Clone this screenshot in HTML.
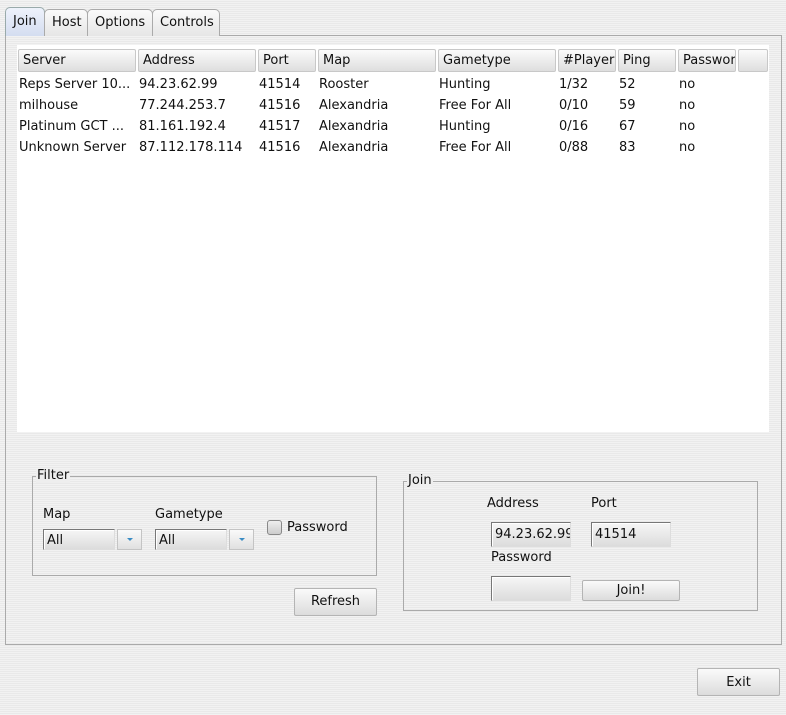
<!DOCTYPE html>
<html><head><meta charset="utf-8"><style>
*{box-sizing:border-box;margin:0;padding:0}
body{width:786px;height:715px;overflow:hidden;font-family:"DejaVu Sans","Liberation Sans",sans-serif;font-size:13px;color:#111;
background:repeating-linear-gradient(to bottom,#f2f2f2 0 1px,#e9e9e9 1px 2px);position:relative}
.a{position:absolute}
.tab{position:absolute;top:9px;height:27px;border:1px solid #aaa;border-bottom:none;border-radius:5px 5px 0 0;background:linear-gradient(#fafafa,#e6e6e6);padding:5px 0 0 7px;white-space:nowrap}
.panel{left:5px;top:35px;width:777px;height:610px;border:1px solid #aaa;background:repeating-linear-gradient(to bottom,#f2f2f2 0 1px,#e9e9e9 1px 2px)}
.tbl{left:17px;top:45px;width:752px;height:387px;background:#fff}
.h{position:absolute;top:49px;height:23px;border:1px solid #c8c8c8;border-radius:2px;background:linear-gradient(#fbfbfb,#dedede);padding:3px 0 0 4px;overflow:hidden;white-space:nowrap}
.c{position:absolute;white-space:nowrap;overflow:hidden;top:74px;line-height:21px}
.grp{position:absolute;border:1px solid #aaa}
.gt{position:absolute;background:#eee;padding:0 1px;line-height:14px}
.btn{position:absolute;border:1px solid #b4b4b4;border-radius:2px;background:linear-gradient(#fafafa,#dcdcdc);text-align:center}
.inp{position:absolute;border:1px solid #777;border-right-color:#ddd;border-bottom-color:#ddd;background:linear-gradient(#f6f6f6,#dcdcdc);padding:3px 0 0 3px;overflow:hidden;white-space:nowrap;box-shadow:inset 1px 1px 0 #fff}
.dd{position:absolute;border:1px solid #c4c4c4;background:linear-gradient(#fafafa,#e0e0e0)}
.dd:after{content:"";position:absolute;left:9px;top:8px;border-left:3px solid transparent;border-right:3px solid transparent;border-top:3px solid #3a8cc4}
</style></head><body>
<div class="a panel"></div>
<div class="tab" style="left:5px;width:40px;top:7px;height:29px;padding-top:6px;background:linear-gradient(#eef2fb,#d4ddf0);border-color:#9aa">Join</div>
<div class="tab" style="left:44px;width:44px">Host</div>
<div class="tab" style="left:87px;width:66px">Options</div>
<div class="tab" style="left:152px;width:68px">Controls</div>
<div class="a tbl"></div>
<div class="h" style="left:18px;width:118px">Server</div>
<div class="h" style="left:138px;width:118px">Address</div>
<div class="h" style="left:258px;width:58px">Port</div>
<div class="h" style="left:318px;width:118px">Map</div>
<div class="h" style="left:438px;width:118px">Gametype</div>
<div class="h" style="left:558px;width:58px">#Players</div>
<div class="h" style="left:618px;width:58px">Ping</div>
<div class="h" style="left:678px;width:58px">Password</div>
<div class="h" style="left:738px;width:30px"></div>
<div class="c" style="left:19px">Reps Server 10...<br>milhouse<br>Platinum GCT ...<br>Unknown Server</div>
<div class="c" style="left:139px">94.23.62.99<br>77.244.253.7<br>81.161.192.4<br>87.112.178.114</div>
<div class="c" style="left:259px">41514<br>41516<br>41517<br>41516</div>
<div class="c" style="left:319px">Rooster<br>Alexandria<br>Alexandria<br>Alexandria</div>
<div class="c" style="left:439px">Hunting<br>Free For All<br>Hunting<br>Free For All</div>
<div class="c" style="left:559px">1/32<br>0/10<br>0/16<br>0/88</div>
<div class="c" style="left:619px">52<br>59<br>67<br>83</div>
<div class="c" style="left:679px">no<br>no<br>no<br>no</div>

<div class="grp" style="left:32px;top:476px;width:345px;height:100px"></div>
<div class="gt" style="left:36px;top:469px">Filter</div>
<div class="a" style="left:43px;top:507px">Map</div>
<div class="a" style="left:155px;top:507px">Gametype</div>
<div class="inp" style="left:43px;top:529px;width:72px;height:21px">All</div>
<div class="dd" style="left:117px;top:529px;width:25px;height:21px"></div>
<div class="inp" style="left:155px;top:529px;width:72px;height:21px">All</div>
<div class="dd" style="left:229px;top:529px;width:25px;height:21px"></div>
<div class="a" style="left:267px;top:520px;width:15px;height:15px;border:1px solid #888;border-radius:3px;background:linear-gradient(#eee,#ccc)"></div>
<div class="a" style="left:287px;top:520px">Password</div>
<div class="btn" style="left:294px;top:588px;width:83px;height:28px;line-height:26px">Refresh</div>

<div class="grp" style="left:403px;top:481px;width:355px;height:130px"></div>
<div class="gt" style="left:407px;top:474px">Join</div>
<div class="a" style="left:487px;top:496px">Address</div>
<div class="a" style="left:591px;top:496px">Port</div>
<div class="inp" style="left:491px;top:522px;width:80px;height:25px;padding-top:4px">94.23.62.99</div>
<div class="inp" style="left:591px;top:522px;width:80px;height:25px;padding-top:4px">41514</div>
<div class="a" style="left:491px;top:550px">Password</div>
<div class="inp" style="left:491px;top:576px;width:80px;height:25px"></div>
<div class="btn" style="left:582px;top:580px;width:98px;height:21px;line-height:20px">Join!</div>

<div class="btn" style="left:697px;top:668px;width:83px;height:28px;line-height:27px">Exit</div>
</body></html>
